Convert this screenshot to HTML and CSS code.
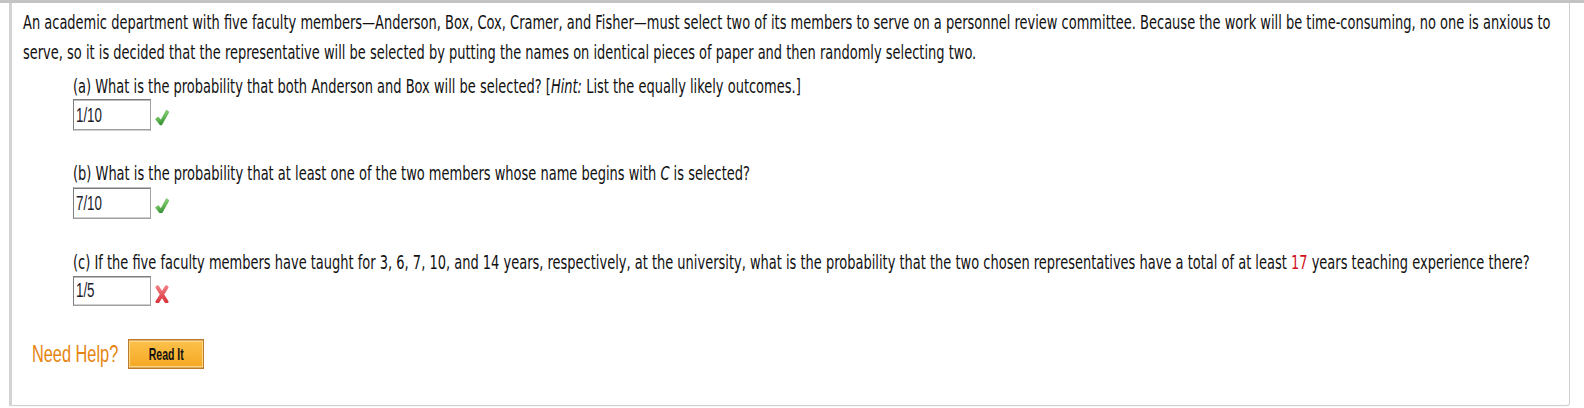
FILE: index.html
```html
<!DOCTYPE html>
<html lang="en">
<head>
<meta charset="utf-8">
<title>Probability question</title>
<link rel="stylesheet" href="styles.css">
</head>
<body>
<div class="topbar"></div>
<div class="page">
  <div class="panel">
    <p class="intro">An academic department with five faculty members—Anderson, Box, Cox, Cramer, and Fisher—must select two of its members to serve on a personnel review committee. Because the work will be time-consuming, no one is anxious to<br>serve, so it is decided that the representative will be selected by putting the names on identical pieces of paper and then randomly selecting two.</p>

    <div class="part">
      <p class="q">(a) What is the probability that both Anderson and Box will be selected? [<i>Hint:</i> List the equally likely outcomes.]</p>
      <div class="answer">
        <input class="field" type="text" value="1/10" readonly>
        <svg class="mark" viewBox="0 0 14 16" preserveAspectRatio="none" aria-label="correct">
          <defs>
            <linearGradient id="g1" x1="0" y1="0" x2="0.4" y2="1">
              <stop offset="0" stop-color="#b5e59c"/>
              <stop offset="0.55" stop-color="#6cc05a"/>
              <stop offset="1" stop-color="#2f8a30"/>
            </linearGradient>
          </defs>
          <polygon points="0.4,9.6 3.4,7.4 5.9,10.6 11.4,0.6 14,2.4 6.8,15.6 5,15.6" fill="url(#g1)" stroke="#3f9a3a" stroke-width="0.4"/>
        </svg>
      </div>
    </div>

    <div class="part">
      <p class="q">(b) What is the probability that at least one of the two members whose name begins with <i>C</i> is selected?</p>
      <div class="answer">
        <input class="field" type="text" value="7/10" readonly>
        <svg class="mark" viewBox="0 0 14 16" preserveAspectRatio="none" aria-label="correct">
          <polygon points="0.4,9.6 3.4,7.4 5.9,10.6 11.4,0.6 14,2.4 6.8,15.6 5,15.6" fill="url(#g1)" stroke="#3f9a3a" stroke-width="0.4"/>
        </svg>
      </div>
    </div>

    <div class="part">
      <p class="q">(c) If the five faculty members have taught for 3, 6, 7, 10, and 14 years, respectively, at the university, what is the probability that the two chosen representatives have a total of at least <span class="red">17</span> years teaching experience there?</p>
      <div class="answer">
        <input class="field" type="text" value="1/5" readonly>
        <svg class="mark cross" viewBox="0 0 13 18" preserveAspectRatio="none" aria-label="incorrect">
          <defs>
            <linearGradient id="g2" x1="0" y1="0" x2="0" y2="1">
              <stop offset="0" stop-color="#f27a7e"/>
              <stop offset="1" stop-color="#d9363d"/>
            </linearGradient>
          </defs>
          <path d="M2.3 2.2 L10.7 15.8 M10.7 2.2 L2.3 15.8" stroke="url(#g2)" stroke-width="3.6" stroke-linecap="round" fill="none"/>
        </svg>
      </div>
    </div>

    <div class="help">
      <span class="need">Need Help?</span>
      <button class="readit" type="button">Read It</button>
    </div>
  </div>
</div>
</body>
</html>
```

FILE: styles.css
```css
:root {
  /* the reference is a tall, narrow rendering: text is stretched vertically */
  --s: 1.5;
}

html, body {
  margin: 0;
  padding: 0;
  background: #ffffff;
}

body {
  min-height: 408px;
}

.topbar {
  height: 3px;
  background: #c3c3c3;
}

.page {
  width: 1578px;
  transform: scaleY(var(--s));
  transform-origin: 0 0;
}

.panel {
  margin-left: 9px;
  width: 1561px;
  box-sizing: border-box;
  border-left: 3px solid #d3d3d3;
  border-right: 1.5px solid #cfcfcf;
  border-bottom: calc(2px / var(--s)) solid #cfcfcf;
  border-bottom-right-radius: 4px calc(4px / var(--s));
  padding: calc(4.5px / var(--s)) 11px calc(36px / var(--s));
  font-family: "DejaVu Sans", Verdana, sans-serif;
  font-size: 13px;
  color: #111111;
}

.intro {
  margin: 0 0 calc(8.5px / var(--s));
  line-height: calc(30px / var(--s));
  white-space: nowrap;
}

.part {
  margin-left: 50px;
}

.part + .part {
  margin-top: calc(33.5px / var(--s));
}

.q {
  margin: 0;
  padding-bottom: calc(2px / var(--s));
  line-height: calc(21.5px / var(--s));
  white-space: nowrap;
}

.red {
  color: #d0101c;
}

.answer {
  display: flex;
  align-items: center;
  gap: 4px;
  height: calc(31px / var(--s));
}

.field {
  box-sizing: border-box;
  width: 78px;
  height: calc(31px / var(--s));
  margin: 0;
  border-style: solid;
  border-color: #7d7d7d #a0a0a0 #a0a0a0 #7d7d7d;
  border-width: calc(1px / var(--s)) 1px;
  padding: 0 0 0 2px;
  font-family: "Liberation Sans", Arial, sans-serif;
  font-size: 13.34px;
  color: #1c1c2c;
  background: #ffffff;
  outline: none;
}

.mark {
  width: 14px;
  height: calc(16px / var(--s));
  margin-top: calc(5px / var(--s));
}

.mark.cross {
  width: 14px;
  height: calc(19px / var(--s));
  margin-top: calc(6px / var(--s));
}

.help {
  display: flex;
  align-items: center;
  margin: calc(32.5px / var(--s)) 0 0 9px;
  height: calc(30px / var(--s));
}

.need {
  font-family: "Liberation Sans", Arial, sans-serif;
  font-size: 16.34px;
  color: #e5850f;
}

.readit {
  box-sizing: border-box;
  margin-left: 10px;
  width: 76px;
  height: calc(30px / var(--s));
  padding: 0;
  border-style: solid;
  border-color: #c07a2c;
  border-width: calc(2px / var(--s)) 1.5px;
  background: linear-gradient(#fcc14c, #f6a823);
  box-shadow: inset 0 0 0 1px #ffd887;
  font-family: "Liberation Sans", Arial, sans-serif;
  font-weight: bold;
  font-size: 10.5px;
  color: #111111;
  cursor: pointer;
}
```
